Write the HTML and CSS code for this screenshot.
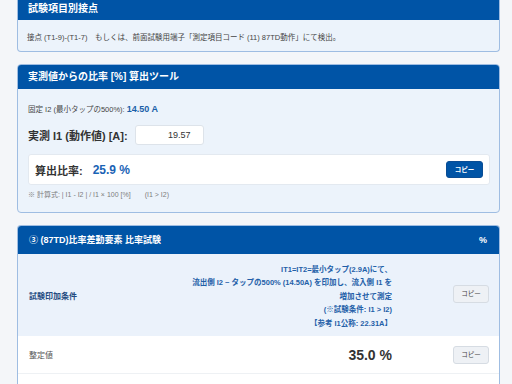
FILE: index.html
```html
<!DOCTYPE html>
<html lang="ja">
<head>
<meta charset="utf-8">
<link rel="stylesheet" href="styles.css">
</head>
<body>
<div class="page">
  <section class="card card-top">
    <div class="card-head head-short">試験項目別接点</div>
    <div class="card-body body-short">接点 (T1-9)-(T1-7)　もしくは、前面試験用端子「測定項目コード (11) 87TD動作」にて検出。</div>
  </section>

  <section class="card">
    <div class="card-head">実測値からの比率 [%] 算出ツール</div>
    <div class="card-body tool">
      <div class="fixed">固定 I2 (最小タップの500%): <span class="fixed-val">14.50 A</span></div>
      <div class="measure">
        <label class="measure-label">実測 I1 (動作値) [A]:</label>
        <div class="input">19.57</div>
      </div>
      <div class="result">
        <span class="result-label">算出比率:</span>
        <span class="result-val">25.9 %</span>
        <button class="btn btn-blue">コピー</button>
      </div>
      <div class="note">※ 計算式: | I1 - I2 | / I1 × 100 [%]　　(I1 &gt; I2)</div>
    </div>
  </section>

  <section class="card card-table">
    <div class="card-head table-head">
      <span>③ (87TD)比率差動要素 比率試験</span>
      <span class="pct">%</span>
    </div>
    <div class="row row-blue">
      <div class="cell-label">試験印加条件</div>
      <div class="cell-val cond">
        <div>IT1=IT2=最小タップ(2.9A)にて、</div>
        <div>流出側 I2 ~ タップの500% (14.50A) を印加し、流入側 I1 を</div>
        <div>増加させて測定</div>
        <div>(※試験条件: I1 &gt; I2)</div>
        <div>【参考 I1公称: 22.31A】</div>
      </div>
      <div class="cell-act"><button class="btn btn-gray">コピー</button></div>
    </div>
    <div class="row">
      <div class="cell-label">整定値</div>
      <div class="cell-val big">35.0 %</div>
      <div class="cell-act"><button class="btn btn-gray">コピー</button></div>
    </div>
    <div class="row">
      <div class="cell-label">&nbsp;</div>
      <div class="cell-val">&nbsp;</div>
      <div class="cell-act"><button class="btn btn-gray">コピー</button></div>
    </div>
  </section>
</div>
</body>
</html>
```

FILE: styles.css
```css
html, body {
  margin: 0;
  padding: 0;
}
body {
  background: #f4f6f9;
  font-family: "Liberation Sans", "Noto Sans CJK JP", sans-serif;
  color: #333;
  width: 512px;
  height: 384px;
  overflow: hidden;
}
.page {
  padding: 0 12px 0 17px;
  display: flex;
  flex-direction: column;
  gap: 12px;
}
.card {
  border: 1px solid #9fbde2;
  border-radius: 4px;
  background: #ecf3fb;
  overflow: hidden;
}
.card-top {
  border-top: none;
  border-radius: 0 0 4px 4px;
}
.card-head {
  background: #0054a6;
  color: #fff;
  font-weight: bold;
  font-size: 10px;
  height: 24px;
  line-height: 24px;
  padding: 0 10px;
}
.head-short {
  height: 20px;
  line-height: 18px;
  font-size: 10px;
}
.card-body {
  padding: 0 9px;
}
.body-short {
  font-size: 7.5px;
  height: 31px;
  line-height: 36px;
  color: #444;
}
.tool {
  padding: 14px 9px 12px 10px;
}
.fixed {
  font-size: 7.5px;
  color: #444;
  line-height: 12px;
}
.fixed-val {
  color: #1a5fa8;
  font-weight: bold;
  font-size: 9px;
}
.measure {
  display: flex;
  align-items: center;
  gap: 7px;
  margin-top: 9px;
}
.measure-label {
  font-size: 11px;
  font-weight: bold;
  color: #333;
}
.input {
  width: 55px;
  height: 18px;
  border: 1px solid #dde3ea;
  border-radius: 3px;
  background: #fff;
  font-size: 9px;
  line-height: 18px;
  text-align: right;
  padding-right: 12px;
  color: #333;
}
.result {
  margin-top: 9px;
  background: #fff;
  border: 1px solid #e3e9f0;
  border-radius: 3px;
  height: 29px;
  display: flex;
  align-items: center;
  padding: 0 6px;
}
.result-label {
  font-size: 11px;
  font-weight: bold;
  color: #333;
}
.result-val {
  font-size: 12px;
  font-weight: bold;
  color: #1a63b5;
  margin-left: 10px;
}
.btn {
  margin-left: auto;
  font-family: "Noto Sans CJK JP", sans-serif;
  font-size: 6.5px;
  border-radius: 3px;
  padding: 0;
  width: 37px;
  height: 17px;
  line-height: 15px;
}
.btn-blue {
  background: #0054a6;
  color: #fff;
  border: 1px solid #0a4d94;
  font-weight: bold;
}
.btn-gray {
  background: #eef1f5;
  color: #444;
  border: 1px solid #d6dce3;
  width: 36px;
  height: 18px;
}
.note {
  font-size: 7px;
  color: #7d7d7d;
  margin-top: 5px;
  line-height: 10px;
}
.card-table {
  border-radius: 4px 4px 0 0;
  border-bottom: none;
  background: #fff;
}
.table-head {
  height: 28px;
  line-height: 28px;
  font-size: 9px;
  display: flex;
  justify-content: space-between;
  padding: 0 12px 0 11px;
}
.pct {
  font-size: 9px;
}
.row {
  display: grid;
  grid-template-columns: 1fr 230px 107px;
  align-items: center;
  border-bottom: 1px solid #eef1f4;
  background: #fff;
  min-height: 37px;
}
.row-blue {
  background: #ebf2fb;
  min-height: 79px;
  padding-bottom: 3px;
  border-bottom: none;
}
.cell-label {
  padding-left: 11px;
  font-size: 8px;
  color: #555;
}
.row-blue .cell-label {
  color: #234a80;
  font-weight: bold;
  padding-top: 4px;
}
.cell-val {
  text-align: right;
}
.cond {
  font-size: 7.5px;
  line-height: 13.5px;
  color: #1f5fa8;
  font-weight: bold;
  padding-top: 6px;
  white-space: nowrap;
}
.big {
  font-size: 14px;
  font-weight: bold;
  color: #333;
}
.cell-act {
  display: flex;
  justify-content: flex-end;
  padding-right: 10px;
}
.cell-act .btn {
  margin-left: 0;
}
```
